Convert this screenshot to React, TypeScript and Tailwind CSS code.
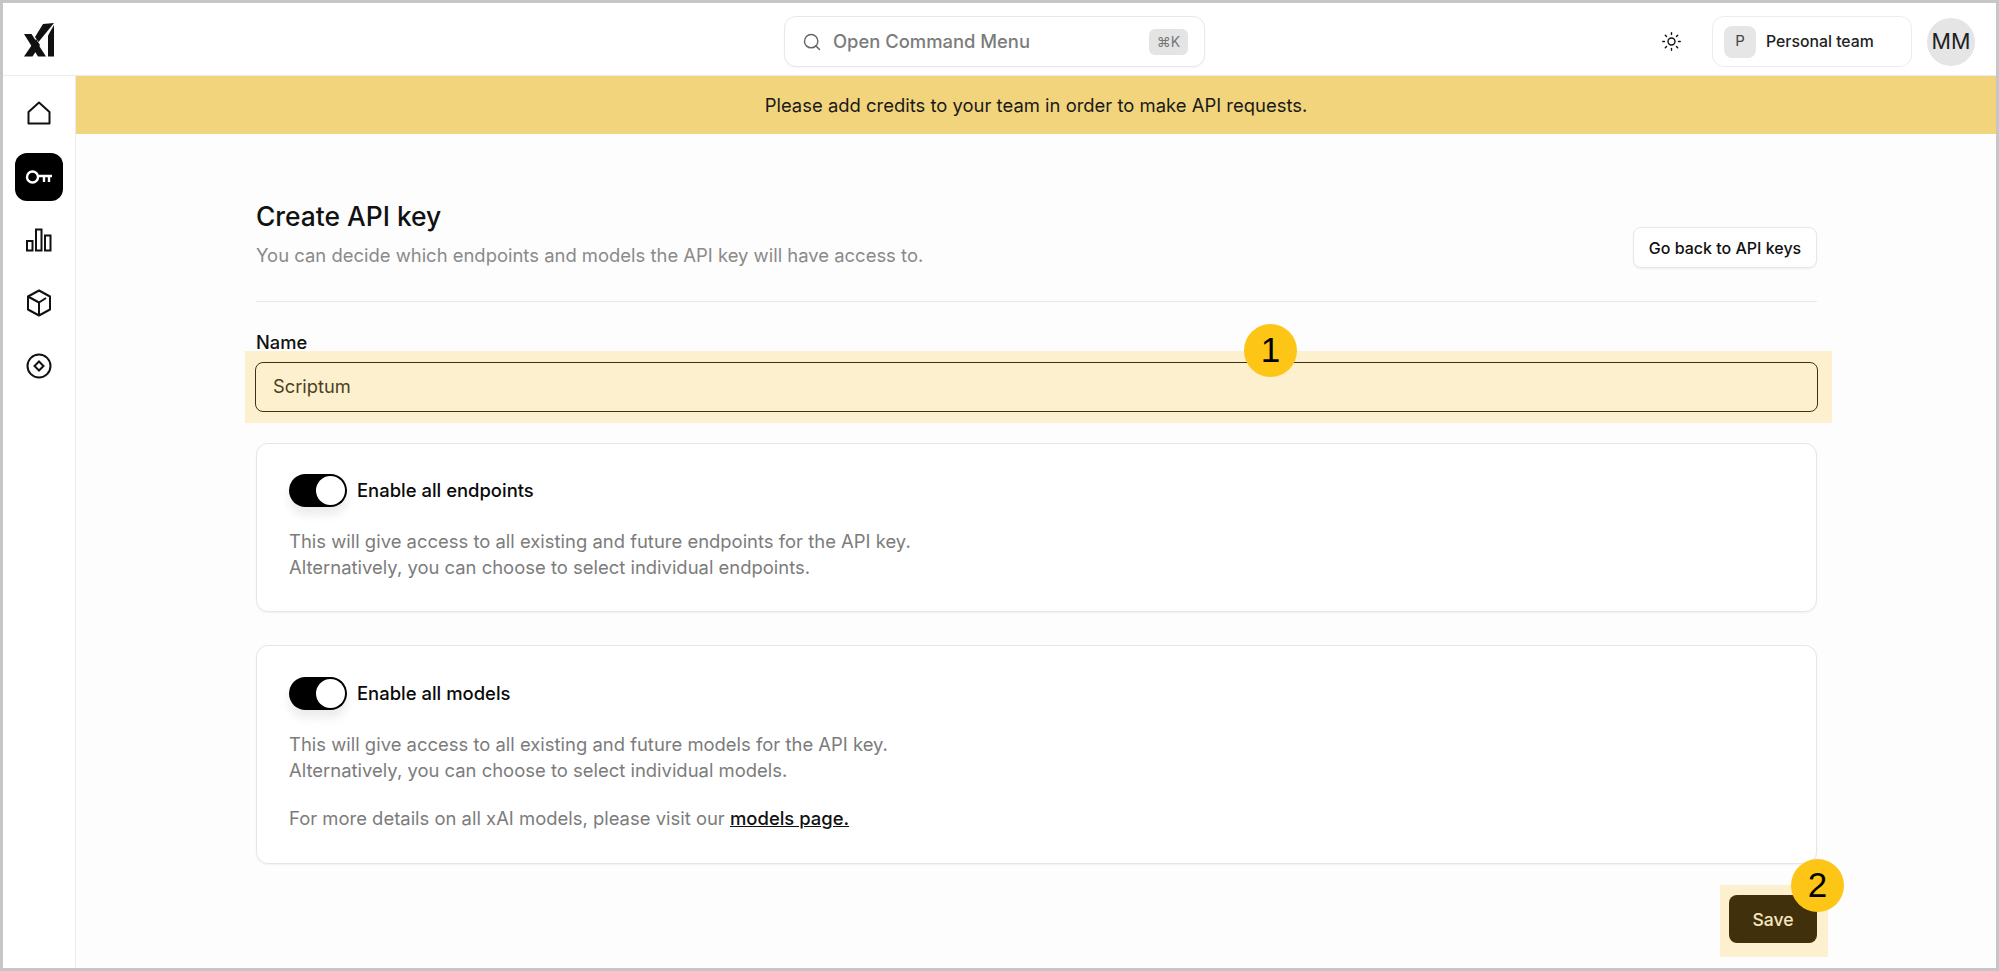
import { Search, Sun } from "lucide-react";

function Logo() {
    return (
        <svg width="32" height="36" viewBox="0 0 32 36" fill="currentColor">
            <polygon points="1,13 8.5,13 23,35.5 15,35.5" />
            <polygon points="1,35.5 9.5,35.5 17,24 13,18" />
            <polygon points="20,3 31,2 15.5,21 12,16" />
            <polygon points="25,14.5 31,4 31,35.5 25,35.5" />
        </svg>
    );
}

function HomeIcon() {
    return (
        <svg width="24" height="24" viewBox="0 0 24 24" fill="none" stroke="currentColor" strokeWidth="2" strokeLinejoin="round">
            <path d="M1.5 11 12 1.5 22.5 11v11.5h-21z" />
        </svg>
    );
}

function KeyIcon() {
    return (
        <svg width="28" height="18" viewBox="0 0 28 18" fill="none" stroke="currentColor" strokeWidth="2.4">
            <circle cx="7.5" cy="9" r="5.5" />
            <path d="M13 8h14M19 8v6M24 8v6" />
        </svg>
    );
}

function BarsIcon() {
    return (
        <svg width="26" height="24" viewBox="0 0 26 24" fill="none" stroke="currentColor" strokeWidth="2">
            <rect x="1" y="13" width="5.5" height="9.5" />
            <rect x="10" y="1.5" width="5.5" height="21" />
            <rect x="19" y="7.5" width="5.5" height="15" />
        </svg>
    );
}

function CubeIcon() {
    return (
        <svg width="26" height="28" viewBox="0 0 26 28" fill="none" stroke="currentColor" strokeWidth="2" strokeLinejoin="round">
            <path d="M13 1.5 24 7.5v13L13 26.5 2 20.5v-13z" />
            <path d="M2 7.5 13 13.5v13M13 13.5 20 9" />
        </svg>
    );
}

function DiscIcon() {
    return (
        <svg width="26" height="26" viewBox="0 0 26 26" fill="none" stroke="currentColor" strokeWidth="2">
            <circle cx="13" cy="13" r="11.5" />
            <path d="M13 8.5 17.5 13 13 17.5 8.5 13z" />
        </svg>
    );
}

function Toggle() {
    return (
        <div className="flex h-[33px] w-[58px] items-center justify-end rounded-full bg-black pr-[2px] shadow-[0_8px_10px_rgba(0,0,0,0.08)]">
            <div className="h-[29px] w-[29px] rounded-full bg-white" />
        </div>
    );
}

function Card({ title, className, children }: { title: string; className: string; children: React.ReactNode }) {
    return (
        <div className={`${className} rounded-xl border border-[#e6e6e6] bg-white pl-[32px] shadow-[0_1px_2px_rgba(0,0,0,0.05)]`}>
            <div className="flex items-center gap-[10px]">
                <Toggle />
                <span className="text-[18.45px] font-[450] text-[#0a0a0a]">{title}</span>
            </div>
            <div className="mt-[21px] text-[18.45px] leading-[26px] text-[#7c7c7c]">{children}</div>
        </div>
    );
}

function Badge({ n, className }: { n: string; className: string }) {
    return (
        <div
            className={`absolute flex h-[53px] w-[53px] items-center justify-center rounded-full bg-[#fdc516] text-[35px] font-['Liberation_Sans',sans-serif] text-black ${className}`}
        >
            {n}
        </div>
    );
}

export default function App() {
    return (
        <div className="flex h-screen w-screen flex-col overflow-hidden border-[3px] border-[#c6c6c6] bg-white font-['Inter',sans-serif]">
            {/* Top bar */}
            <header className="flex h-[73px] shrink-0 items-center border-b border-[#ececec] bg-white pt-[5px]">
                <div className="-mt-[6px] ml-[20px] w-[761px] text-[#111]">
                    <Logo />
                </div>
                <div className="flex h-[51px] w-[421px] items-center rounded-xl border border-[#e8e8e8] bg-white pl-[17px] pr-[16px] shadow-[0_1px_2px_rgba(0,0,0,0.04)]">
                    <Search size={20} strokeWidth={1.75} className="text-[#666]" />
                    <span className="ml-[11px] text-[18.4px] font-[450] text-[#7c7c7c]">Open Command Menu</span>
                    <span className="ml-auto flex h-[26px] w-[39px] items-center justify-center rounded-md bg-[#e4e4e4] text-[14px] text-[#777]">⌘K</span>
                </div>
                <Sun size={21} strokeWidth={1.6} className="ml-[456px] text-[#111]" />
                <div className="ml-[30px] flex h-[51px] w-[200px] items-center rounded-xl border border-[#ececec] bg-white pl-[11px]">
                    <span className="flex h-[32px] w-[32px] items-center justify-center rounded-lg bg-[#e6e6e6] text-[15px] text-[#444]">P</span>
                    <span className="ml-[10px] text-[15.8px] font-[450] text-[#222]">Personal team</span>
                </div>
                <div className="ml-[15px] flex h-[48px] w-[48px] items-center justify-center rounded-full bg-[#e5e5e5] text-[21.5px] text-[#222]">MM</div>
            </header>

            <div className="flex min-h-0 flex-1">
                {/* Sidebar */}
                <aside className="flex w-[73px] shrink-0 flex-col items-center border-r border-[#ececec] bg-white pt-[23px] text-[#111]">
                    <div className="flex h-[28px] items-center"><HomeIcon /></div>
                    <div className="mt-[26px] flex h-[48px] w-[48px] items-center justify-center rounded-xl bg-black text-white"><KeyIcon /></div>
                    <div className="mt-[26px] flex h-[26px] items-center"><BarsIcon /></div>
                    <div className="mt-[36px] flex h-[28px] items-center"><CubeIcon /></div>
                    <div className="mt-[35px] flex h-[28px] items-center"><DiscIcon /></div>
                </aside>

                <main className="flex min-w-0 flex-1 flex-col bg-[#fdfdfd]">
                    <div className="flex h-[58px] shrink-0 items-center justify-center bg-[#f2d47c] pt-[2px] text-[18.45px] text-[#1a1a1a]">
                        Please add credits to your team in order to make API requests.
                    </div>

                    <div className="relative flex flex-1 flex-col pl-[180px] pr-[179px] pt-[64px]">
                        <div className="flex items-end justify-between border-b border-[#e8e8e8] pb-[33px]">
                            <div>
                                <h1 className="text-[26.4px] font-[450] leading-[36px] text-[#111]">Create API key</h1>
                                <p className="mt-[8px] text-[18.45px] leading-[26px] text-[#8a8a8a]">You can decide which endpoints and models the API key will have access to.</p>
                            </div>
                            <button className="flex h-[41px] w-[184px] items-center justify-center rounded-lg border border-[#e8e8e8] bg-white text-[16px] font-[450] text-[#111] shadow-[0_1px_2px_rgba(0,0,0,0.06)]">
                                Go back to API keys
                            </button>
                        </div>

                        <label className="mt-[32px] block text-[18.3px] font-[450] leading-[17px] text-[#111]">Name</label>
                        <div className="-ml-[11px] -mr-[15px] bg-[#fdf0cf] pb-[11px] pl-[10px] pr-[14px] pt-[11px]">
                            <div className="flex h-[50px] items-center rounded-lg border-[1.5px] border-[#3d3217] pl-[17px] text-[18.3px] text-[#4b3f20]">Scriptum</div>
                        </div>

                        <div className="mt-[20px] flex flex-col gap-[33px]">
                            <Card title="Enable all endpoints" className="h-[169px] pt-[30px]">
                                <p>This will give access to all existing and future endpoints for the API key.</p>
                                <p>Alternatively, you can choose to select individual endpoints.</p>
                            </Card>
                            <Card title="Enable all models" className="h-[219px] pt-[31px]">
                                <p>This will give access to all existing and future models for the API key.</p>
                                <p>Alternatively, you can choose to select individual models.</p>
                                <p className="mt-[22px]">
                                    For more details on all xAI models, please visit our{" "}
                                    <span className="font-[450] text-[#111] underline">models page.</span>
                                </p>
                            </Card>
                        </div>

                        <div className="mt-[21px] flex justify-end">
                            <div className="-mr-[11px] bg-[#fdf0cf] pb-[14px] pl-[9px] pr-[11px] pt-[10px]">
                                <button className="flex h-[48px] w-[88px] items-center justify-center rounded-lg bg-[#40300b] pt-[3px] text-[17.6px] font-[450] text-[#f5e6c0]">Save</button>
                            </div>
                        </div>

                        <Badge n="1" className="left-[1168px] top-[190px]" />
                        <Badge n="2" className="left-[1715px] top-[725px]" />
                    </div>
                </main>
            </div>
        </div>
    );
}
